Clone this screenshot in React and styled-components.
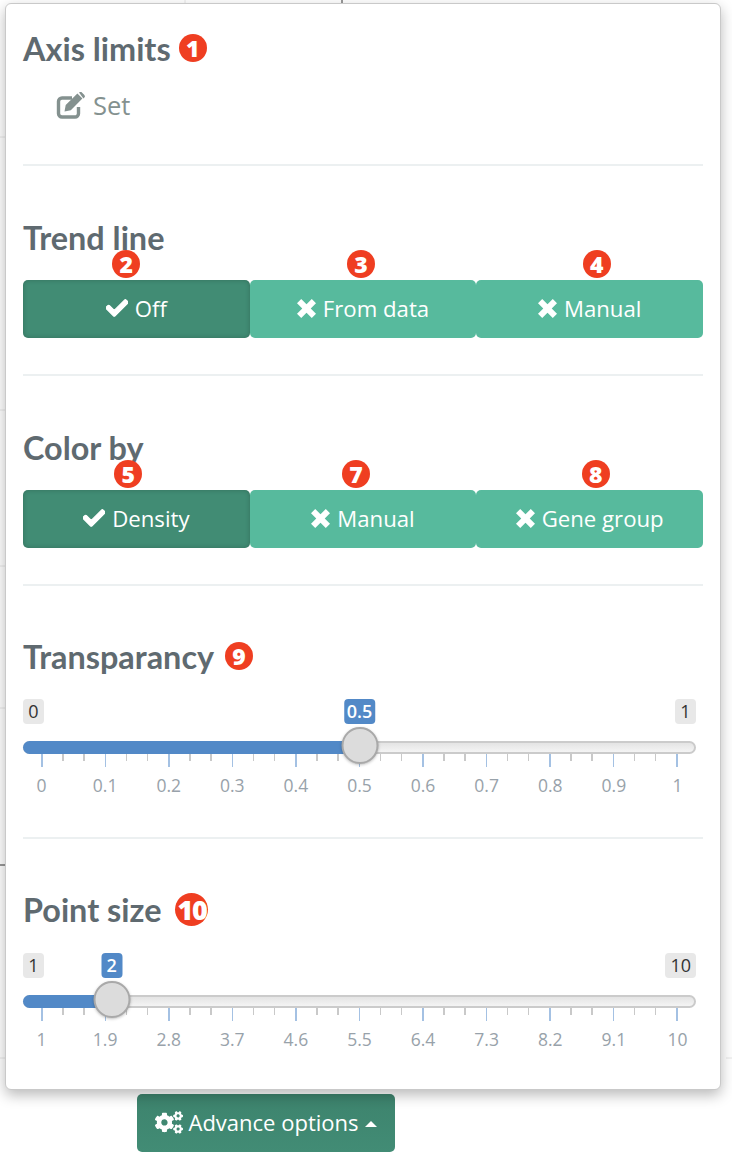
/* eslint-disable */
import React from "react";
import styled, { createGlobalStyle } from "styled-components";
import { FaCheck, FaCogs } from "react-icons/fa";

const GlobalStyle = createGlobalStyle`
  html, body {
    margin: 0;
    padding: 0;
    background: #fff;
    font-family: "Open Sans", "Liberation Sans", sans-serif;
  }
  * { box-sizing: border-box; }
`;

const Page = styled.div`
  position: relative;
  width: 732px;
  height: 1156px;
  overflow: hidden;
  padding: 3px 11px 0 5px;
`;

const PlotBehind = styled.svg`
  position: absolute;
  inset: 0;
`;

const Panel = styled.div`
  position: relative;
  width: 716px;
  height: 1087px;
  background: #fff;
  border: 1px solid #c9c9c9;
  border-radius: 6px;
  box-shadow: 0 5px 14px rgba(0, 0, 0, 0.28);
  padding: 0 17px;
`;

const Section = styled.section`
  height: ${(p) => p.$height}px;
  padding-top: ${(p) => p.$top}px;
  border-bottom: 2px solid #ecf0f1;

  &:last-child {
    border-bottom: none;
  }
`;

const Heading = styled.h3`
  display: flex;
  align-items: center;
  gap: ${(p) => p.$gap || 8}px;
  margin: 0;
  height: 36px;
  font-family: "Lato", sans-serif;
  font-weight: 700;
  font-size: 32.4px;
  color: #5f6a70;
`;

const Badge = styled.span`
  display: inline-flex;
  align-items: center;
  justify-content: center;
  flex: none;
  width: ${(p) => p.$size || 28}px;
  height: ${(p) => p.$size || 28}px;
  border-radius: 50%;
  background: #ef3e21;
  color: #fff;
  font-family: "Open Sans", sans-serif;
  font-weight: 800;
  font-size: ${(p) => (p.$size ? 27 : 23)}px;
  letter-spacing: ${(p) => (p.$size ? -1.5 : 0)}px;
`;

const SetRow = styled.div`
  display: flex;
  align-items: center;
  gap: 7px;
  margin: 22px 0 0 33px;
  color: #84918f;
  font-size: 25.5px;

  svg {
    width: 30px;
    height: 27px;
  }
`;

const ButtonGroup = styled.div`
  display: grid;
  grid-template-columns: repeat(3, 1fr);
  margin-top: 25px;
`;

const ButtonCell = styled.div`
  position: relative;
`;

const FloatingBadge = styled(Badge)`
  position: absolute;
  top: -30px;
  left: calc(50% + ${(p) => p.$dx}px);
  transform: translateX(-50%);
`;

const ToggleButton = styled.button`
  display: flex;
  align-items: center;
  justify-content: center;
  gap: 7px;
  width: 100%;
  height: 58px;
  padding: 0 0 2px;
  border: none;
  border-radius: 5px;
  font-family: "Open Sans", sans-serif;
  font-size: 22.2px;
  color: #fff;
  background: ${(p) => (p.$on ? "#418c74" : "#57ba9d")};
  box-shadow: ${(p) => (p.$on ? "inset 0 0 5px rgba(0, 0, 0, 0.2)" : "none")};

  svg {
    flex: none;
  }
`;

const CheckIcon = styled(FaCheck)`
  width: 22px;
  height: 22px;
  stroke: currentColor;
  stroke-width: 30;
`;

const Slider = styled.div`
  position: relative;
  margin-top: ${(p) => p.$top}px;
  height: 102px;
`;

const EdgeLabel = styled.span`
  position: absolute;
  top: 0;
  ${(p) => (p.$right ? "right: 7px;" : "left: 0;")}
  height: 25px;
  line-height: 25px;
  padding: 0 5px;
  min-width: 21px;
  text-align: center;
  border-radius: 4px;
  background: #e8e8e8;
  color: #333;
  font-size: 18px;
`;

const ValueLabel = styled.span`
  position: absolute;
  top: 0;
  transform: translateX(-50%);
  height: 25px;
  line-height: 25px;
  padding: 0 3px;
  min-width: 21px;
  text-align: center;
  border-radius: 4px;
  background: #5289c7;
  color: #fff;
  font-size: 18px;
  font-weight: 600;
`;

const Track = styled.div`
  position: absolute;
  top: 42px;
  left: 0;
  right: 7px;
  height: 13px;
  border-radius: 7px;
  border: 2px solid #cbcbcb;
  background: linear-gradient(#e4e4e4, #f4f4f4);
`;

const Fill = styled.div`
  position: absolute;
  top: 42px;
  left: 0;
  height: 13px;
  border-radius: 7px 0 0 7px;
  background: #5289c7;
`;

const Handle = styled.div`
  position: absolute;
  top: 28px;
  width: 37px;
  height: 37px;
  transform: translateX(-50%);
  border-radius: 50%;
  background: #dcdcdc;
  border: 2px solid #a9a9a9;
  box-shadow: 0 1px 3px rgba(0, 0, 0, 0.25);
`;

const TickRow = styled.div`
  position: absolute;
  top: 55px;
  left: 18px;
  width: 637px;
  height: 14px;
  display: flex;
  justify-content: space-between;
`;

const Tick = styled.i`
  display: block;
  width: 1.5px;
  height: ${(p) => (p.$major ? 13 : 7)}px;
  background: ${(p) => (p.$major ? "#a4c1e3" : "#c9c9c9")};
`;

const TickLabels = styled.div`
  position: absolute;
  top: 75px;
  left: 18px;
  width: 637px;
  display: flex;
  justify-content: space-between;
`;

const TickLabel = styled.span`
  display: flex;
  justify-content: center;
  width: 1px;
  white-space: nowrap;
  font-size: 17.5px;
  line-height: 23px;
  color: #98a2aa;
`;

const AdvanceButton = styled.button`
  display: flex;
  align-items: center;
  justify-content: center;
  gap: 6px;
  width: 258px;
  height: 58px;
  margin: 4px 0 0 132px;
  padding: 0 0 2px;
  border: none;
  border-radius: 5px;
  background: linear-gradient(#3d836d, #428c75);
  color: #fff;
  font-family: "Open Sans", sans-serif;
  font-size: 22px;

  svg {
    width: 28px;
    height: 23px;
  }
`;

const Caret = styled.i`
  width: 0;
  height: 0;
  margin: 4px 0 0 1px;
  border-left: 6px solid transparent;
  border-right: 6px solid transparent;
  border-bottom: 6px solid #fff;
`;

function EditIcon() {
  return (
    <svg viewBox="0 0 30 27">
      <path
        d="M16 6H6a3.5 3.5 0 0 0-3.5 3.5v12A3.5 3.5 0 0 0 6 25h13a3.5 3.5 0 0 0 3.5-3.5V15"
        fill="none"
        stroke="currentColor"
        strokeWidth="3.4"
      />
      <path d="M8.5 19.5l1.2-6.4L21.4 1.6l5 5L14.8 18.2zM23 .6l1-.6h1.4l3 3 .6 1.4-.6 1-1 1z" fill="currentColor" />
    </svg>
  );
}

function CrossIcon() {
  return (
    <svg width="19" height="19" viewBox="0 0 18 18">
      <path d="M4 0l5 5 5-5 4 4-5 5 5 5-4 4-5-5-5 5-4-4 5-5-5-5z" fill="currentColor" />
    </svg>
  );
}

function RangeSlider({ top, min, max, value, ticks }) {
  const span = 637;
  const at = 18 + ((value - min) / (max - min)) * span;
  const marks = Array.from({ length: 31 }, (_, i) => i);
  return (
    <Slider $top={top}>
      <EdgeLabel>{min}</EdgeLabel>
      <ValueLabel style={{ left: at }}>{value}</ValueLabel>
      <EdgeLabel $right>{max}</EdgeLabel>
      <Track />
      <Fill style={{ width: at }} />
      <TickRow>
        {marks.map((i) => (
          <Tick key={i} $major={i % 3 === 0} />
        ))}
      </TickRow>
      <TickLabels>
        {ticks.map((t) => (
          <TickLabel key={t}>{t}</TickLabel>
        ))}
      </TickLabels>
      <Handle style={{ left: at }} />
    </Slider>
  );
}

function Toggle({ options }) {
  return (
    <ButtonGroup>
      {options.map((o) => (
        <ButtonCell key={o.label}>
          <FloatingBadge $dx={o.dx}>{o.badge}</FloatingBadge>
          <ToggleButton $on={o.on}>
            {o.on ? <CheckIcon /> : <CrossIcon />}
            {o.label}
          </ToggleButton>
        </ButtonCell>
      ))}
    </ButtonGroup>
  );
}

export default function App() {
  return (
    <Page>
      <GlobalStyle />
      <PlotBehind width="732" height="1156">
        <path d="M0 137H6M0 410H6M0 566H6M0 708H6M185 0V3M0 1058H6M726 1058H732" stroke="#e6e6e6" />
        <path d="M342 0V4M0 865H6" stroke="#333" />
      </PlotBehind>
      <Panel>
        <Section $height={162} $top={26}>
          <Heading>
            Axis limits <Badge>1</Badge>
          </Heading>
          <SetRow>
            <EditIcon />
            Set
          </SetRow>
        </Section>
        <Section $height={210} $top={53}>
          <Heading>Trend line</Heading>
          <Toggle
            options={[
              { label: "Off", on: true, badge: 2, dx: -10 },
              { label: "From data", badge: 3, dx: -2 },
              { label: "Manual", badge: 4, dx: 7 },
            ]}
          />
        </Section>
        <Section $height={210} $top={53}>
          <Heading>Color by</Heading>
          <Toggle
            options={[
              { label: "Density", on: true, badge: 5, dx: -8 },
              { label: "Manual", badge: 7, dx: -7 },
              { label: "Gene group", badge: 8, dx: 6 },
            ]}
          />
        </Section>
        <Section $height={253} $top={52}>
          <Heading $gap={11}>
            Transparancy <Badge>9</Badge>
          </Heading>
          <RangeSlider
            top={25}
            min={0}
            max={1}
            value={0.5}
            ticks={[0, 0.1, 0.2, 0.3, 0.4, 0.5, 0.6, 0.7, 0.8, 0.9, 1]}
          />
        </Section>
        <Section $height={250} $top={52}>
          <Heading $gap={14}>
            Point size <Badge $size={33}>10</Badge>
          </Heading>
          <RangeSlider
            top={26}
            min={1}
            max={10}
            value={2}
            ticks={[1, 1.9, 2.8, 3.7, 4.6, 5.5, 6.4, 7.3, 8.2, 9.1, 10]}
          />
        </Section>
      </Panel>
      <AdvanceButton>
        <FaCogs />
        Advance options
        <Caret />
      </AdvanceButton>
    </Page>
  );
}
